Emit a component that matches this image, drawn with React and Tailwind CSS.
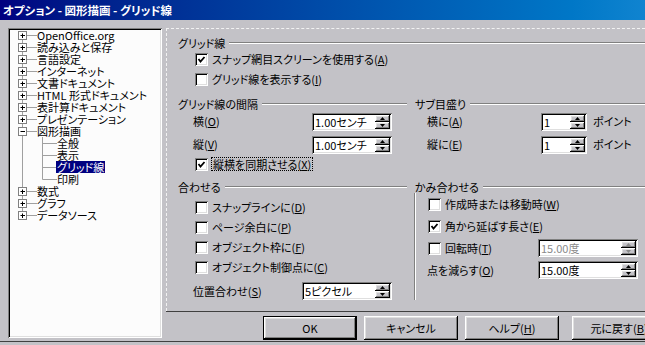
import React from 'react';

const font = "font-['Noto_Sans_CJK_JP','Noto_Sans_CJK_SC',sans-serif] [font-feature-settings:'palt']";

const treeItems = [
  { label: 'OpenOffice.org', kind: 'plus', first: true },
  { label: '読み込みと保存', kind: 'plus' },
  { label: '言語設定', kind: 'plus' },
  { label: 'インターネット', kind: 'plus' },
  { label: '文書ドキュメント', kind: 'plus' },
  { label: 'HTML 形式ドキュメント', kind: 'plus' },
  { label: '表計算ドキュメント', kind: 'plus' },
  { label: 'プレゼンテーション', kind: 'plus' },
  { label: '図形描画', kind: 'minus' },
  { label: '全般', kind: 'child' },
  { label: '表示', kind: 'child' },
  { label: 'グリッド線', kind: 'child', selected: true },
  { label: '印刷', kind: 'child', last: true },
  { label: '数式', kind: 'plus' },
  { label: 'グラフ', kind: 'plus' },
  { label: 'データソース', kind: 'plus', last: true },
];

const TreeLines = ({ item }) => {
  const line = '#a0a0a0';
  if (item.kind === 'child') {
    return (
      <svg width="47" height="12" className="shrink-0">
        <line x1="12.5" y1="0" x2="12.5" y2="12" stroke={line} />
        <line x1="32.5" y1="0" x2="32.5" y2={item.last ? 6.5 : 12} stroke={line} />
        <line x1="32.5" y1="6.5" x2="47" y2="6.5" stroke={line} />
      </svg>
    );
  }
  return (
    <svg width="27" height="12" className="shrink-0">
      <line x1="12.5" y1={item.first ? 6 : 0} x2="12.5" y2={item.last ? 6 : 12} stroke={line} />
      <line x1="17" y1="6.5" x2="27" y2="6.5" stroke={line} />
      <rect x="8.5" y="2.5" width="8" height="8" fill="#fff" stroke="#808080" />
      <line x1="10.5" y1="6.5" x2="15" y2="6.5" stroke="#000" />
      {item.kind === 'plus' && <line x1="12.5" y1="4.5" x2="12.5" y2="9" stroke="#000" />}
    </svg>
  );
};

const sunken = 'shadow-[inset_1px_1px_0_#808080,inset_-1px_-1px_0_#fff,inset_2px_2px_0_#000,inset_-2px_-2px_0_#dfdfdf]';
const raised = 'shadow-[inset_-1px_-1px_0_#000,inset_1px_1px_0_#fff,inset_-2px_-2px_0_#808080,inset_2px_2px_0_#dfdfdf]';

const Checkbox = ({ checked }) => (
  <div className={`w-[13px] h-[13px] bg-white shrink-0 ${sunken} flex items-center justify-center`}>
    {checked && (
      <svg width="9" height="9" viewBox="0 0 9 9">
        <polyline points="1.5,4 3.5,6.5 7.5,2" fill="none" stroke="#000" strokeWidth="1.8" />
      </svg>
    )}
  </div>
);

const Arrow = ({ up, color }) => (
  <svg width="5" height="3" viewBox="0 0 5 3">
    <polygon points={up ? '2.5,0 5,3 0,3' : '0,0 5,0 2.5,3'} fill={color} />
  </svg>
);

const SpinBox = ({ value, className, disabled }) => (
  <div className={`flex h-[18px] bg-white ${sunken} ${className}`}>
    <div className={`flex-1 pl-[3px] pt-[2px] leading-[14px] whitespace-nowrap ${disabled ? 'text-[#8a8a8a]' : 'text-black'}`}>
      {value}
    </div>
    <div className="flex flex-col w-[17px] py-[2px] pr-[2px]">
      <div className={`flex-1 bg-[#c3c2c7] ${raised} flex items-center justify-center`}>
        <Arrow up color={disabled ? '#8a8a8a' : '#000'} />
      </div>
      <div className={`flex-1 bg-[#c3c2c7] ${raised} flex items-center justify-center`}>
        <Arrow color={disabled ? '#8a8a8a' : '#000'} />
      </div>
    </div>
  </div>
);

const GroupLabel = ({ children, className = '' }) => (
  <div className={`flex items-center h-[12px] ${className}`}>
    <span className="leading-[12px] whitespace-nowrap">{children}</span>
    <div className="flex-1 ml-[4px] h-[2px] border-t border-t-[#808080] border-b border-b-white" />
  </div>
);

const CheckRow = ({ checked, children, className = 'h-[20px] pl-[17px]' }) => (
  <div className={`flex items-center ${className}`}>
    <Checkbox checked={checked} />
    <span className="ml-[4px] whitespace-nowrap leading-[14px]">{children}</span>
  </div>
);

const Button = ({ children, isDefault }) => (
  <div
    className={`h-[24px] w-[94px] shrink-0 bg-[#c3c2c7] flex items-center justify-center ${
      isDefault ? 'border border-black' : ''
    }`}
  >
    <div className={`w-full h-full flex items-center justify-center whitespace-nowrap ${raised}`}>{children}</div>
  </div>
);

export default function App() {
  return (
    <div className={`w-[645px] h-[345px] bg-[#c3c2c7] overflow-hidden flex flex-col text-[11px] text-black ${font}`}>
      {/* Title bar */}
      <div className="h-[20px] shrink-0 bg-linear-to-r from-[#000080] to-[#1084d0] text-white text-[11.5px] font-bold leading-[20px] pl-[3px] whitespace-nowrap">
        オプション - 図形描画 - グリッド線
      </div>

      <div className="flex h-[321px] shrink-0 pt-[8px] pl-[8px]">
        {/* Tree */}
        <div className={`w-[154px] h-[310px] shrink-0 bg-[#fcfcfc] pt-[1px] pl-[2px] ${sunken}`}>
          {treeItems.map((item) => (
            <div key={item.label} className="flex h-[12px] items-center">
              <TreeLines item={item} />
              <span
                className={`leading-[12px] whitespace-nowrap ${
                  item.selected ? 'bg-[#000080] text-white px-[1px] -ml-[1px]' : ''
                }`}
              >
                {item.label}
              </span>
            </div>
          ))}
        </div>

        <div className="flex flex-col flex-1 ml-[4px] min-w-0">
          {/* Options page */}
          <div className="h-[283px] shrink-0 border-t border-l border-dashed border-[#f2f2f2] pt-[8px] pl-[11px]">
            <GroupLabel>グリッド線</GroupLabel>
            <CheckRow checked>
              スナップ網目スクリーンを使用する(<u>A</u>)
            </CheckRow>
            <CheckRow>
              グリッド線を表示する(<u>I</u>)
            </CheckRow>

            <div className="flex mt-[9px]">
              <div className="w-[229px] shrink-0">
                <GroupLabel>グリッド線の間隔</GroupLabel>
                <div className="flex items-center h-[23px] pl-[15px]">
                  <span className="w-[119px] shrink-0">
                    横(<u>O</u>)
                  </span>
                  <SpinBox value="1.00センチ" className="w-[80px]" />
                </div>
                <div className="flex items-center h-[23px] pl-[15px]">
                  <span className="w-[119px] shrink-0">
                    縦(<u>V</u>)
                  </span>
                  <SpinBox value="1.00センチ" className="w-[80px]" />
                </div>
                <div className="flex items-center h-[16px] pl-[17px]">
                  <Checkbox checked />
                  <span className="ml-[3px] px-[1px] leading-[12px] border border-dotted border-black whitespace-nowrap">
                    縦横を同期させる(<u>X</u>)
                  </span>
                </div>
              </div>
              <div className="flex-1 ml-[7px] min-w-0">
                <GroupLabel className="pl-[1px]">サブ目盛り</GroupLabel>
                <div className="flex items-center h-[23px] pl-[13px]">
                  <span className="w-[114px] shrink-0">
                    横に(<u>A</u>)
                  </span>
                  <SpinBox value="1" className="w-[46px]" />
                  <span className="ml-[6px]">ポイント</span>
                </div>
                <div className="flex items-center h-[23px] pl-[13px]">
                  <span className="w-[114px] shrink-0">
                    縦に(<u>E</u>)
                  </span>
                  <SpinBox value="1" className="w-[46px]" />
                  <span className="ml-[6px]">ポイント</span>
                </div>
              </div>
            </div>

            <div className="flex mt-[9px]">
              <div className="w-[229px] shrink-0">
                <GroupLabel>合わせる</GroupLabel>
                <div className="mt-[4px]">
                  <CheckRow>
                    スナップラインに(<u>D</u>)
                  </CheckRow>
                  <CheckRow>
                    ページ余白に(<u>P</u>)
                  </CheckRow>
                  <CheckRow>
                    オブジェクト枠に(<u>F</u>)
                  </CheckRow>
                  <CheckRow>
                    オブジェクト制御点に(<u>C</u>)
                  </CheckRow>
                </div>
                <div className="flex items-center h-[22px] mt-[3px] pl-[15px]">
                  <span className="w-[109px] shrink-0">
                    位置合わせ(<u>S</u>)
                  </span>
                  <SpinBox value="5ピクセル" className="w-[90px]" />
                </div>
              </div>
              <div className="flex-1 ml-[7px] min-w-0">
                <GroupLabel className="pl-[1px]">かみ合わせる</GroupLabel>
                <div className="border-l border-l-[#808080] shadow-[inset_1px_0_0_#fff] pb-[19px]">
                  <CheckRow className="h-[22px] pl-[13px]">
                    作成時または移動時(<u>W</u>)
                  </CheckRow>
                  <CheckRow checked className="h-[22px] pl-[13px]">
                    角から延ばす長さ(<u>E</u>)
                  </CheckRow>
                  <div className="flex items-center h-[22px] pl-[13px]">
                    <Checkbox />
                    <span className="ml-[4px] w-[93px] shrink-0">
                      回転時(<u>T</u>)
                    </span>
                    <SpinBox value="15.00度" className="w-[100px]" disabled />
                  </div>
                  <div className="flex items-center h-[22px] pl-[12px]">
                    <span className="w-[111px] shrink-0">
                      点を減らす(<u>O</u>)
                    </span>
                    <SpinBox value="15.00度" className="w-[100px]" />
                  </div>
                </div>
              </div>
            </div>
          </div>
          <div className="h-px shrink-0 bg-[#404040]" />

          {/* Buttons */}
          <div className="flex mt-[4px] pl-[97px] gap-[7px]">
            <Button isDefault>OK</Button>
            <Button>キャンセル</Button>
            <Button>
              ヘルプ(<u>H</u>)
            </Button>
            <div className="ml-[6px]">
              <Button>
                元に戻す(<u>B</u>)
              </Button>
            </div>
          </div>
        </div>
      </div>
      <div className="h-px shrink-0 bg-[#404040]" />
    </div>
  );
}
